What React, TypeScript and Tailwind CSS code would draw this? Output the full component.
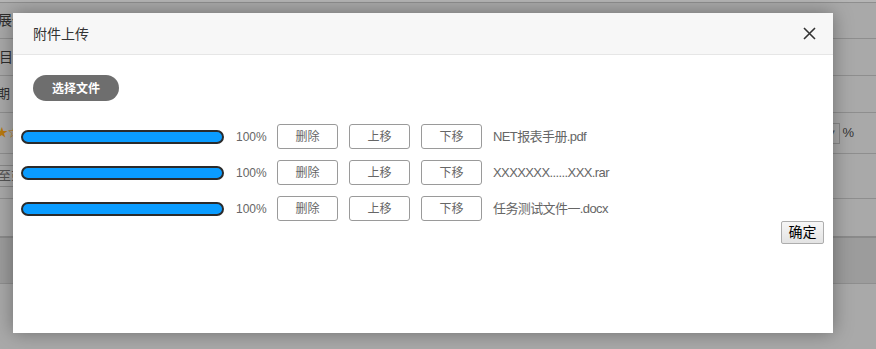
import React from 'react';

const files = ['NET报表手册.pdf', 'XXXXXXX......XXX.rar', '任务测试文件一.docx'];

function UploadRow({ name }: { name: string }) {
  return (
    <div className="flex items-center h-[25px]">
      <div className="w-[203px] h-[14px] rounded-full border-2 border-[#2b2b2b] bg-[#0a9cff]" />
      <span className="ml-[12px] w-[31px] text-[12px] text-[#666]">100%</span>
      <div className="ml-[10px] flex gap-[11px]">
        {['删除', '上移', '下移'].map((t) => (
          <button
            key={t}
            className="w-[61px] h-[25px] rounded-[3px] border border-[#9a9a9a] bg-white text-[12px] text-[#666]"
          >
            {t}
          </button>
        ))}
      </div>
      <span className="ml-[11px] text-[13px] tracking-[-0.6px] text-[#666] whitespace-nowrap">{name}</span>
    </div>
  );
}

export default function App() {
  return (
    <div
      className="relative w-[876px] h-[349px] overflow-hidden bg-[#a9a9a9] text-[#333]"
      style={{ fontFamily: '"Liberation Sans", "Noto Sans CJK SC", sans-serif' }}
    >
      {/* dimmed page underneath */}
      <div className="flex flex-col">
        <div className="h-[3px] border-b border-[#8e8e8e] bg-[#b5b5b5]" />
        <div className="h-[36px] border-b border-[#8e8e8e] flex items-center text-[14px] text-[#2e2e2e] -ml-[2px]">展一</div>
        <div className="h-[37px] border-b border-[#8e8e8e] flex items-center text-[14px] text-[#2e2e2e] -ml-[1px]">目首</div>
        <div className="h-[37px] border-b border-[#8e8e8e] flex items-center text-[13px] -ml-[3px]">
          <span className="text-[#2e2e2e]">期 - </span>
          <span className="text-[#8a5a10]">1</span>
        </div>
        <div className="h-[41px] border-b border-[#8e8e8e] flex items-center justify-between text-[12px]">
          <span className="text-[#b87a10] -ml-[4px]">★☆</span>
          <div className="flex items-center mr-[22px]">
            <div className="w-[22px] h-[21px] border border-[#888] border-l-0 flex items-center justify-end pr-[3px] text-[8px] text-[#555]">▼</div>
            <span className="ml-[2px] text-[13px] text-[#333]">%</span>
          </div>
        </div>
        <div className="h-[45px] border-b border-[#8e8e8e] flex items-center">
          <div className="h-[22px] w-[40px] border border-[#888] border-l-0 flex items-center text-[13px] text-[#555] -ml-[8px] pl-[6px]">至或</div>
        </div>
        <div className="h-[39px] border-b-2 border-[#8a8a8a]" />
        <div className="h-[46px] border-b border-[#8e8e8e] bg-[#9c9c9c]" />
        <div className="flex-1 bg-[#ababab]" />
      </div>

      {/* modal */}
      <div className="absolute left-[13px] top-[13px] w-[820px] h-[320px] bg-white shadow-[0_0_18px_rgba(0,0,0,0.35)] flex flex-col">
        <div
          className="h-[42px] bg-[#f7f7f7] border-b border-[#e6e6e6] flex items-center justify-between pl-[20px] pr-[17px]"
          style={{ fontFamily: '"Noto Sans CJK SC", sans-serif' }}
        >
          <span className="text-[14px] text-[#333]">附件上传</span>
          <svg width="13" height="13" viewBox="0 0 13 13" className="text-[#333]">
            <path d="M1 1 L12 12 M12 1 L1 12" stroke="currentColor" strokeWidth="1.6" />
          </svg>
        </div>
        <div className="flex flex-col pt-[20px]">
          <div className="pl-[20px]">
            <button
              className="w-[86px] h-[26px] rounded-full bg-[#6e6e6e] text-white text-[12px] font-bold"
              style={{ fontFamily: '"Noto Sans CJK SC", sans-serif' }}
            >
              选择文件
            </button>
          </div>
          <div className="mt-[23px] pl-[8px] flex flex-col gap-[11px]">
            {files.map((f) => (
              <UploadRow key={f} name={f} />
            ))}
          </div>
          <div className="flex justify-end pr-[9px]">
            <button className="w-[43px] h-[23px] border border-[#adadad] rounded-[2px] bg-gradient-to-b from-[#f6f6f6] to-[#e3e3e3] text-[14px] text-black">
              确定
            </button>
          </div>
        </div>
      </div>
    </div>
  );
}
